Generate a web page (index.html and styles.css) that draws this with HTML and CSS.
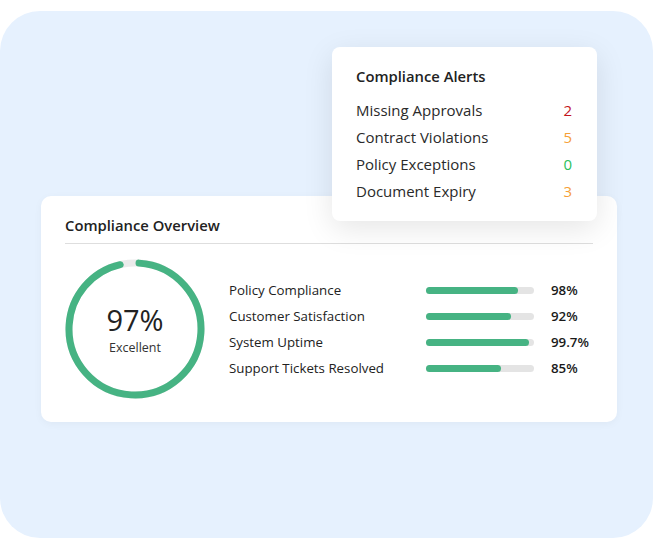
FILE: index.html
```html
<!DOCTYPE html>
<html>

<head>
    <title>Compliance Overview</title>
    <link rel="stylesheet" href="styles.css">
</head>

<body>
    <div class="panel">
        <div class="alerts">
            <h3>Compliance Alerts</h3>
            <div class="alert-row"><span>Missing Approvals</span><span class="count red">2</span></div>
            <div class="alert-row"><span>Contract Violations</span><span class="count orange">5</span></div>
            <div class="alert-row"><span>Policy Exceptions</span><span class="count green">0</span></div>
            <div class="alert-row"><span>Document Expiry</span><span class="count orange">3</span></div>
        </div>

        <div class="overview">
            <h2>Compliance Overview</h2>
            <div class="overview-body">
                <div class="score">
                    <svg width="140" height="140" viewBox="0 0 140 140">
                        <circle cx="70" cy="70" r="66" fill="none" stroke="#ebebeb" stroke-width="7" />
                        <!-- green arc starts just right of the top and runs clockwise -->
                        <circle cx="70" cy="70" r="66" fill="none" stroke="#46b383" stroke-width="7"
                            stroke-linecap="round" stroke-dasharray="395 20" transform="rotate(-86.5 70 70)" />
                    </svg>
                    <div class="score-text">
                        <div class="score-value">97%</div>
                        <div class="score-label">Excellent</div>
                    </div>
                </div>

                <div class="metrics">
                    <div class="metric">
                        <span class="metric-name">Policy Compliance</span>
                        <div class="bar"><div class="fill" style="width: 85%"></div></div>
                        <span class="metric-value">98%</span>
                    </div>
                    <div class="metric">
                        <span class="metric-name">Customer Satisfaction</span>
                        <div class="bar"><div class="fill" style="width: 79%"></div></div>
                        <span class="metric-value">92%</span>
                    </div>
                    <div class="metric">
                        <span class="metric-name">System Uptime</span>
                        <div class="bar"><div class="fill" style="width: 95%"></div></div>
                        <span class="metric-value">99.7%</span>
                    </div>
                    <div class="metric">
                        <span class="metric-name">Support Tickets Resolved</span>
                        <div class="bar"><div class="fill" style="width: 69%"></div></div>
                        <span class="metric-value">85%</span>
                    </div>
                </div>
            </div>
        </div>
    </div>
</body>

</html>
```
FILE: styles.css
```css
body {
    margin: 0;
    background: #fff;
    font-family: "Open Sans", "Noto Sans", sans-serif;
    color: #222;
}

.panel {
    position: relative;
    margin-top: 11px;
    width: 653px;
    height: 527px;
    background-color: #e6f1fe;
    border-radius: 40px;
    overflow: hidden;
}

/* floating alerts card */
.alerts {
    position: absolute;
    left: 332px;
    top: 36px;
    z-index: 2;
    box-sizing: border-box;
    width: 265px;
    height: 174px;
    padding: 19px 25px 0 24px;
    background-color: #fff;
    border-radius: 8px;
    box-shadow: 0px 8px 30px rgba(0, 0, 0, 0.1);
}

.alerts h3 {
    margin: 0 0 11px;
    font-size: 14.8px;
    font-weight: 600;
    line-height: 20px;
}

.alert-row {
    display: flex;
    justify-content: space-between;
    font-size: 15px;
    line-height: 27px;
    color: #2a2a2a;
}

.count {
    font-weight: 500;
}

.red {
    color: #c3141c;
}

.orange {
    color: #f6a038;
}

.green {
    color: #2bbf5a;
}

/* main card */
.overview {
    box-sizing: border-box;
    width: 576px;
    height: 226px;
    margin: 185px 0 0 41px;
    padding: 19px 24px 0;
    background-color: #fff;
    border-radius: 10px;
    box-shadow: 0px 2px 8px rgba(0, 0, 0, 0.04);
}

.overview h2 {
    margin: 0;
    padding-bottom: 8px;
    border-bottom: 1px solid #dedede;
    font-size: 14.8px;
    font-weight: 600;
    line-height: 20px;
}

.overview-body {
    display: flex;
    align-items: center;
    padding-top: 15px;
}

.score {
    position: relative;
    width: 140px;
    height: 140px;
}

.score svg {
    display: block;
}

.score-text {
    position: absolute;
    inset: 0;
    display: flex;
    flex-direction: column;
    align-items: center;
    justify-content: center;
    padding-bottom: 2px;
}

.score-value {
    font-size: 29px;
    line-height: 40px;
}

.score-label {
    font-size: 12.5px;
    line-height: 16px;
    color: #333;
}

.metrics {
    margin-left: 24px;
}

.metric {
    display: flex;
    align-items: center;
    height: 26px;
    font-size: 13.3px;
}

.metric-name {
    width: 197px;
}

.bar {
    width: 108px;
    height: 7px;
    background-color: #e4e4e4;
    border-radius: 4px;
}

.fill {
    height: 100%;
    background-color: #46b383;
    border-radius: 4px;
}

.metric-value {
    margin-left: 17px;
    font-weight: 600;
    color: #1a1a1a;
}
```
